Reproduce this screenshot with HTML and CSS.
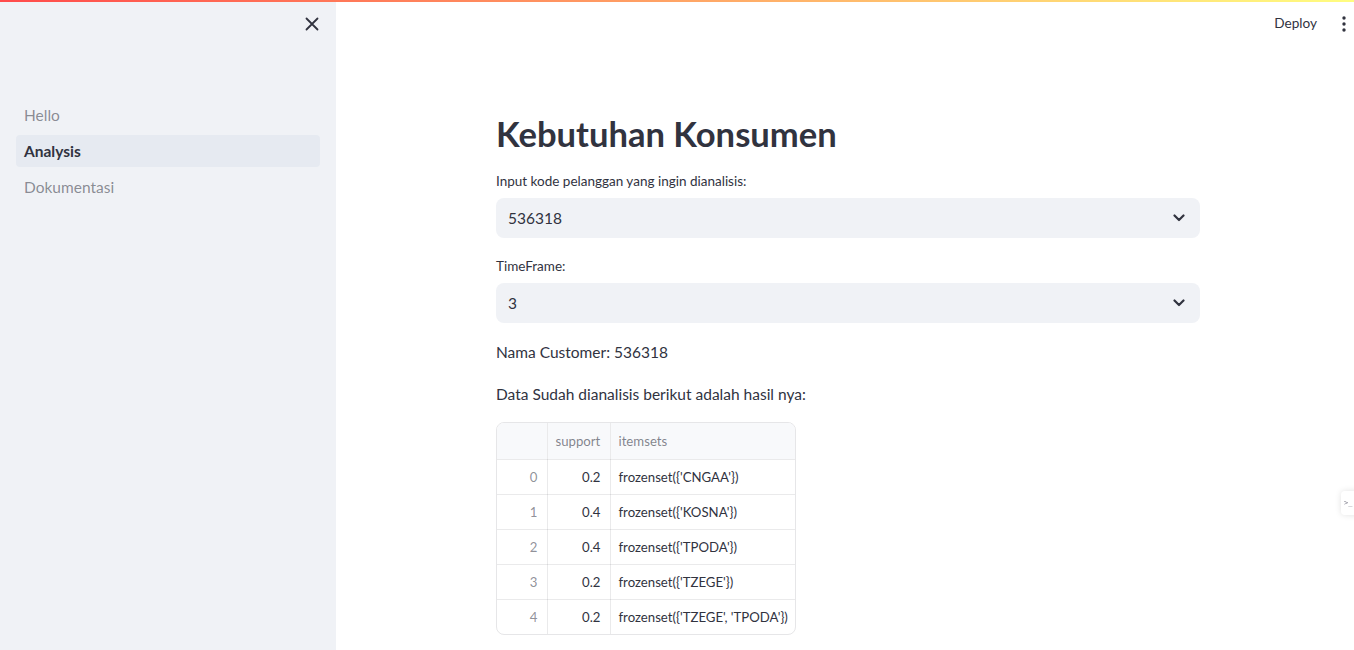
FILE: index.html
```html
<!DOCTYPE html>
<html lang="id">
<head>
<meta charset="utf-8">
<title>Analysis</title>
<link rel="stylesheet" href="styles.css">
</head>
<body>
<div class="decoration"></div>
<div class="app">
  <aside class="sidebar">
    <div class="sidebar-top">
      <button class="close-btn" aria-label="Close sidebar">
        <svg width="14" height="14" viewBox="0 0 14 14"><path d="M1.5 1.5 L12.5 12.5 M12.5 1.5 L1.5 12.5" stroke="#31333f" stroke-width="1.8" stroke-linecap="round"/></svg>
      </button>
    </div>
    <nav class="nav">
      <a class="nav-item">Hello</a>
      <a class="nav-item active">Analysis</a>
      <a class="nav-item">Dokumentasi</a>
    </nav>
  </aside>
  <main class="main">
    <header class="topbar">
      <span class="deploy">Deploy</span>
      <span class="kebab">
        <svg width="4" height="16" viewBox="0 0 4 16"><circle cx="2" cy="2" r="1.7" fill="#31333f"/><circle cx="2" cy="8" r="1.7" fill="#31333f"/><circle cx="2" cy="14" r="1.7" fill="#31333f"/></svg>
      </span>
    </header>
    <section class="block">
      <h1 class="title">Kebutuhan Konsumen</h1>
      <label class="label">Input kode pelanggan yang ingin dianalisis:</label>
      <div class="select">
        <span>536318</span>
        <svg class="chev" width="12" height="8" viewBox="0 0 12 8"><path d="M1.5 1.5 L6 6 L10.5 1.5" fill="none" stroke="#31333f" stroke-width="2.2" stroke-linecap="round" stroke-linejoin="round"/></svg>
      </div>
      <label class="label second">TimeFrame:</label>
      <div class="select">
        <span>3</span>
        <svg class="chev" width="12" height="8" viewBox="0 0 12 8"><path d="M1.5 1.5 L6 6 L10.5 1.5" fill="none" stroke="#31333f" stroke-width="2.2" stroke-linecap="round" stroke-linejoin="round"/></svg>
      </div>
      <p class="text first">Nama Customer: 536318</p>
      <p class="text">Data Sudah dianalisis berikut adalah hasil nya:</p>
      <div class="table-wrap">
        <table class="df">
          <colgroup>
            <col class="c-idx">
            <col class="c-num">
            <col class="c-str">
          </colgroup>
          <thead>
            <tr><th class="idx"></th><th class="num">support</th><th class="str">itemsets</th></tr>
          </thead>
          <tbody>
            <tr><td class="idx">0</td><td class="num">0.2</td><td class="str">frozenset({'CNGAA'})</td></tr>
            <tr><td class="idx">1</td><td class="num">0.4</td><td class="str">frozenset({'KOSNA'})</td></tr>
            <tr><td class="idx">2</td><td class="num">0.4</td><td class="str">frozenset({'TPODA'})</td></tr>
            <tr><td class="idx">3</td><td class="num">0.2</td><td class="str">frozenset({'TZEGE'})</td></tr>
            <tr><td class="idx">4</td><td class="num">0.2</td><td class="str">frozenset({'TZEGE', 'TPODA'})</td></tr>
          </tbody>
        </table>
      </div>
    </section>
  </main>
</div>
<div class="side-widget"><span>&gt;_</span></div>
</body>
</html>
```

FILE: styles.css
```css
* { box-sizing: border-box; }
html, body {
  margin: 0;
  padding: 0;
  height: 100%;
  overflow: hidden;
}
body {
  font-family: Lato, "Noto Sans", sans-serif;
  color: #31333f;
  background: #ffffff;
}
.decoration {
  position: fixed;
  top: 0;
  left: 0;
  right: 0;
  height: 2px;
  background: linear-gradient(90deg, #ff4b4b, #fffd80);
  z-index: 10;
}
.app {
  display: flex;
  height: 650px;
}
.sidebar {
  width: 336px;
  flex: 0 0 336px;
  background: #f0f2f6;
  display: flex;
  flex-direction: column;
}
.sidebar-top {
  display: flex;
  justify-content: flex-end;
  padding: 17px 17px 0 0;
  height: 99px;
}
.close-btn {
  border: 0;
  background: transparent;
  padding: 0;
  width: 14px;
  height: 14px;
  display: flex;
}
.nav {
  display: flex;
  flex-direction: column;
  gap: 4px;
  padding: 0 16px;
}
.nav-item {
  display: flex;
  align-items: center;
  height: 32px;
  padding: 0 8px;
  border-radius: 4px;
  font-size: 15.5px;
  color: rgba(49, 51, 63, 0.55);
}
.nav-item.active {
  background: #e6eaf1;
  color: #31333f;
  font-weight: 700;
}
.main {
  flex: 1;
  display: flex;
  flex-direction: column;
}
.topbar {
  height: 46px;
  display: flex;
  align-items: center;
  justify-content: flex-end;
  padding-right: 8px;
  gap: 25px;
}
.deploy {
  font-size: 13.6px;
  color: #31333f;
}
.kebab {
  display: flex;
  padding-top: 1px;
}
.block {
  width: 704px;
  margin-left: 160px;
  padding-top: 66px;
  display: flex;
  flex-direction: column;
}
.title {
  margin: 0;
  font-size: 34.6px;
  line-height: 44px;
  font-weight: 700;
  color: #31333f;
}
.label {
  margin-top: 15px;
  font-size: 13.5px;
  line-height: 21px;
  margin-bottom: 6px;
  color: #31333f;
}
.label.second { margin-top: 18px; }
.select {
  height: 40px;
  background: #f0f2f6;
  border-radius: 8px;
  display: flex;
  align-items: center;
  justify-content: space-between;
  padding: 0 15px 0 12px;
  font-size: 15.5px;
}
.chev { display: block; }
.text {
  margin: 0;
  font-size: 15.5px;
  line-height: 24px;
  margin-top: 18px;
}
.text.first { margin-top: 17px; }
.table-wrap {
  margin-top: 16px;
  width: 300px;
  border: 1px solid rgba(49, 51, 63, 0.12);
  border-radius: 8px;
  overflow: hidden;
}
.df {
  border-collapse: collapse;
  table-layout: fixed;
  width: 298px;
  font-size: 13.2px;
}
.c-idx { width: 50px; }
.c-num { width: 63px; }
.c-str { width: 185px; }
.df th, .df td {
  border-right: 1px solid rgba(49, 51, 63, 0.1);
  border-bottom: 1px solid rgba(49, 51, 63, 0.1);
  padding: 0 9px 0 8px;
  white-space: nowrap;
  overflow: hidden;
}
.df th:last-child, .df td:last-child { border-right: 0; }
.df tbody tr:last-child td { border-bottom: 0; }
.df thead tr { height: 36px; background: #f8f9fb; }
.df tbody tr { height: 35px; }
.df th {
  font-weight: 400;
  color: rgba(49, 51, 63, 0.6);
  text-align: left;
}
.df .idx { text-align: right; color: rgba(49, 51, 63, 0.55); }
.df .num { text-align: right; }
.df th.num { text-align: left; }
.df .str { text-align: left; }
.side-widget {
  position: fixed;
  left: 1341px;
  top: 491px;
  width: 20px;
  height: 24px;
  background: #ffffff;
  box-shadow: 0 0 6px rgba(0, 0, 0, 0.12);
  border-radius: 4px 0 0 4px;
  font-family: "DejaVu Sans Mono", monospace;
  font-size: 7px;
  color: #7a7a88;
  padding: 8px 0 0 3px;
}
```
